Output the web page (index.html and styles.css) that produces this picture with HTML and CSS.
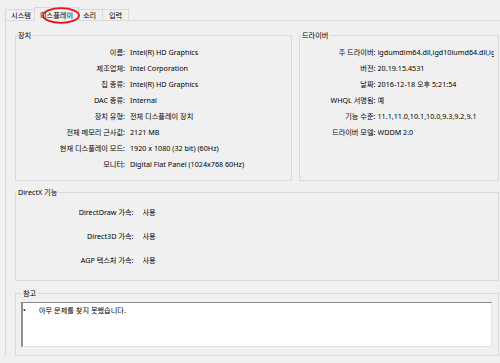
FILE: index.html
```html
<!DOCTYPE html>
<html lang="ko">
<head>
  <meta charset="UTF-8">
  <meta name="viewport" content="width=device-width, initial-scale=1.0">
  <title>DirectX 진단 도구 - 디스플레이</title>
  <link rel="stylesheet" href="styles.css">
</head>
<body>

  <!-- 탭 -->
  <div class="tabs">
    <div class="tab tab-sys">시스템</div>
    <div class="tab tab-active">디스플레이</div>
    <div class="tab tab-short">소리</div>
    <div class="tab tab-short">입력</div>
  </div>

  <!-- 탭 페이지 -->
  <div class="page">
    <div class="top-row">
      <fieldset class="group group-device">
        <legend>장치</legend>
        <dl class="props props-device">
          <dt>이름:</dt><dd>Intel(R) HD Graphics</dd>
          <dt>제조업체:</dt><dd>Intel Corporation</dd>
          <dt>칩 종류:</dt><dd>Intel(R) HD Graphics</dd>
          <dt>DAC 종류:</dt><dd>Internal</dd>
          <dt>장치 유형:</dt><dd>전체 디스플레이 장치</dd>
          <dt>전체 메모리 근사값:</dt><dd>2121 MB</dd>
          <dt>현재 디스플레이 모드:</dt><dd>1920 x 1080 (32 bit) (60Hz)</dd>
          <dt>모니터:</dt><dd>Digital Flat Panel (1024x768 60Hz)</dd>
        </dl>
      </fieldset>

      <fieldset class="group group-driver">
        <legend>드라이버</legend>
        <dl class="props props-driver">
          <dt>주 드라이버:</dt><dd>igdumdim64.dll,igd10iumd64.dll,igd10iumd64.dll,igd12umd64.dll</dd>
          <dt>버전:</dt><dd>20.19.15.4531</dd>
          <dt>날짜:</dt><dd>2016-12-18 오후 5:21:54</dd>
          <dt>WHQL 서명됨:</dt><dd>예</dd>
          <dt>기능 수준:</dt><dd>11.1,11.0,10.1,10.0,9.3,9.2,9.1</dd>
          <dt>드라이버 모델:</dt><dd>WDDM 2.0</dd>
        </dl>
      </fieldset>
    </div>

    <fieldset class="group group-dx">
      <legend>DirectX 기능</legend>
      <dl class="props props-dx">
        <dt>DirectDraw 가속:</dt><dd>사용</dd>
        <dt>Direct3D 가속:</dt><dd>사용</dd>
        <dt>AGP 텍스처 가속:</dt><dd>사용</dd>
      </dl>
    </fieldset>

    <fieldset class="group group-notes">
      <legend>참고</legend>
      <div class="notes-box">
        <div class="note"><span class="bullet">•</span>아무 문제를 찾지 못했습니다.</div>
      </div>
    </fieldset>
  </div>

  <!-- 빨간 표시 -->
  <svg class="mark" width="44" height="22" viewBox="0 0 44 22">
    <ellipse cx="22" cy="10.5" rx="18" ry="7.3" fill="none" stroke="#e3141b" stroke-width="1.8"/>
  </svg>

</body>
</html>
```

FILE: styles.css
```css
body {
  margin: 0;
  width: 500px;
  height: 363px;
  overflow: hidden;
  position: relative;
  background-color: #f0f0f0;
  color: #000;
  font-family: "Noto Sans", "Noto Sans CJK KR", sans-serif;
  font-size: 7.2px;
}

/* 탭 */
.tabs {
  display: flex;
  align-items: flex-end;
  height: 20px;
  padding-left: 5px;
}

.tab {
  box-sizing: border-box;
  height: 11px;
  line-height: 10px;
  text-align: center;
  border: 1px solid #d9d9d9;
  border-bottom: none;
  margin-left: -1px;
  background-color: #f0f0f0;
}

.tab-sys {
  width: 32px;
  margin-left: 0;
}

.tab-short {
  width: 27px;
}

.tab-active {
  position: relative;
  z-index: 1;
  width: 45px;
  height: 14px;
  line-height: 13px;
  margin: 0 -2px -1px -3px;
  padding-top: 1px;
}

/* 탭 페이지 */
.page {
  box-sizing: border-box;
  width: 495px;
  margin-left: 5px;
  padding: 9px 1px 0 9px;
  border-top: 1px solid #d9d9d9;
  border-left: 1px solid #d9d9d9;
}

.top-row {
  display: flex;
  gap: 7px;
}

.group {
  margin: 0;
  padding: 0;
  min-width: 0;
  border: 1px solid #d9d9d9;
}

.group legend {
  padding: 0 2px;
  line-height: 10px;
}

.group-device {
  width: 277px;
  box-sizing: border-box;
}

.group-driver {
  flex: 1;
}

.group-dx {
  margin-top: 6px;
}

.group-notes {
  margin-top: 7px;
}

/* 속성 목록 */
.props {
  display: grid;
  margin: 0;
  padding: 4px 0 8px;
  grid-auto-rows: 16px;
  align-items: center;
  white-space: nowrap;
}

.props dt {
  text-align: right;
}

.props dd {
  margin: 0;
  overflow: hidden;
  min-width: 0;
}

.props-device {
  grid-template-columns: 109px 1fr;
  column-gap: 5px;
}

.props-driver {
  grid-template-columns: 75.5px 1fr;
  column-gap: 2px;
  padding-right: 4px;
}

.props-dx {
  grid-template-columns: 117.5px 1fr;
  column-gap: 9px;
  grid-auto-rows: 24px;
  padding-top: 3px;
}

/* 참고 */
.group-notes {
  padding: 4px 6px 8px 5px;
}

.notes-box {
  box-sizing: border-box;
  height: 45px;
  background-color: #fff;
  border-top: 1px solid #8a8a8a;
  border-left: 2px solid #8f8f8f;
  border-right: 1px solid #e3e3e3;
  border-bottom: 1px solid #e3e3e3;
  padding-top: 2px;
}

.note {
  display: flex;
  line-height: 10px;
}

.bullet {
  width: 16px;
  flex: none;
}

/* 빨간 표시 */
.mark {
  position: absolute;
  z-index: 2;
  left: 39px;
  top: 5px;
}
```
